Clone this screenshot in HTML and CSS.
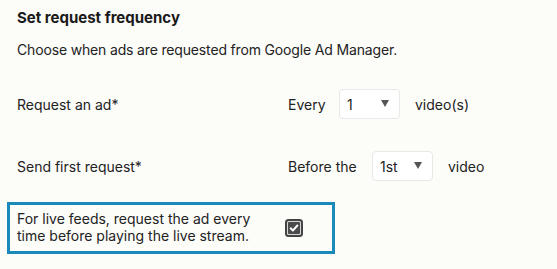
FILE: index.html
```html
<!DOCTYPE html>
<html>
<head>
<meta charset="utf-8">
<link rel="stylesheet" href="styles.css">
</head>
<body>
<div class="panel">
  <h2 class="title">Set request frequency</h2>
  <p class="desc">Choose when ads are requested from Google Ad Manager.</p>
  <div class="row row-first">
    <div class="label">Request an ad*</div>
    <div class="controls">
      <span class="pre pre-every">Every</span>
      <div class="select"><span class="val">1</span><span class="arrow"></span></div>
      <span class="post">video(s)</span>
    </div>
  </div>
  <div class="row row-second">
    <div class="label">Send first request*</div>
    <div class="controls">
      <span class="pre pre-before">Before the</span>
      <div class="select"><span class="val">1st</span><span class="arrow"></span></div>
      <span class="post">video</span>
    </div>
  </div>
  <div class="live">
    <div class="live-text">For live feeds, request the ad every<br>time before playing the live stream.</div>
    <span class="check">
      <svg width="18" height="18" viewBox="0 0 18 18">
        <rect x="0" y="0" width="18" height="18" rx="3.5" fill="#444"/>
        <rect x="2" y="2" width="14" height="14" rx="1.5" fill="#d8d8d8"/>
        <rect x="3" y="3" width="12" height="12" rx="1" fill="#4a4a4a"/>
        <path d="M5.6 9.3 L7.9 11.5 L12.4 6.5" fill="none" stroke="#fff" stroke-width="1.9" stroke-linecap="round" stroke-linejoin="round"/>
      </svg>
    </span>
  </div>
</div>
</body>
</html>
```

FILE: styles.css
```css
html, body {
  margin: 0;
  padding: 0;
  background: #fcfcf9;
}
body {
  font-family: Inter, "Liberation Sans", sans-serif;
  font-size: 14px;
  color: #222;
  width: 557px;
  height: 269px;
  overflow: hidden;
}
.panel {
  padding-top: 8px;
}
.title {
  margin: 0 0 0 17px;
  font-size: 15px;
  font-weight: 700;
  line-height: 20px;
  color: #1a1a1a;
}
.desc {
  margin: 12px 0 0 17px;
  line-height: 20px;
  letter-spacing: -0.16px;
}
.row {
  display: flex;
  align-items: center;
  height: 30px;
  padding-left: 17px;
}
.row-first {
  margin-top: 29px;
}
.row-second {
  margin-top: 32px;
}
.label {
  width: 271px;
}
.controls {
  display: flex;
  align-items: center;
}
.pre-every {
  width: 51px;
}
.pre-before {
  width: 84px;
}
.select {
  box-sizing: border-box;
  width: 61px;
  height: 30px;
  border: 1px solid #e8e8e6;
  border-radius: 4px;
  background: #fff;
  display: flex;
  align-items: center;
  justify-content: space-between;
  padding: 0 10px 0 7px;
}
.arrow {
  width: 0;
  height: 0;
  border-left: 4px solid transparent;
  border-right: 4px solid transparent;
  border-top: 7px solid #555;
  margin-top: -2px;
}
.post {
  margin-left: 15px;
}
.live {
  box-sizing: border-box;
  margin: 21px 0 0 7px;
  width: 328px;
  height: 52px;
  border: 3px solid #1a8bb8;
  display: flex;
  align-items: center;
  padding: 0 0 2px 7px;
}
.live-text {
  width: 268px;
  line-height: 17px;
}
.check {
  display: flex;
  margin-top: 2px;
}
```
